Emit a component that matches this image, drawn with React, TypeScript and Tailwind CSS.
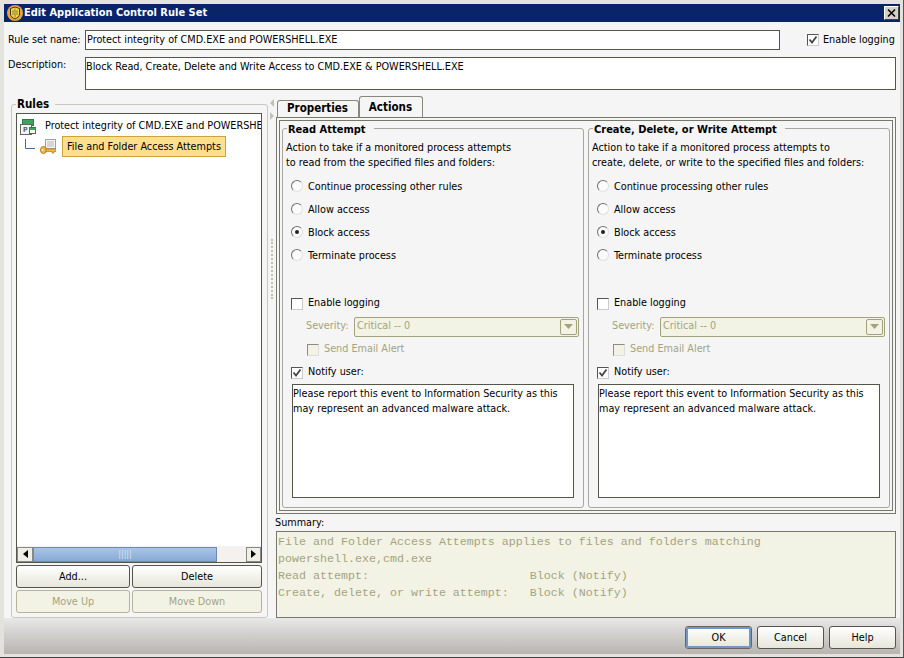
import React from 'react';

const Radio = ({ label, checked }: { label: string; checked?: boolean }) => (
  <div className="flex h-[23px] items-center pl-[5px]">
    <span className="mb-[2px] flex h-[12px] w-[12px] items-center justify-center rounded-full border border-[#707070] border-r-[#e0e0e0] border-b-[#e0e0e0] bg-[#fbfbfb]">
      {checked && <span className="h-[4px] w-[4px] rounded-full bg-[#222]" />}
    </span>
    <span className="ml-[5px] pt-[1px]">{label}</span>
  </div>
);

const Check = ({ checked, disabled }: { checked?: boolean; disabled?: boolean }) => (
  <span
    className={
      disabled
        ? 'flex h-[12px] w-[12px] items-center justify-center border border-[#8c8c80] border-r-[#ddd] border-b-[#ddd] bg-[#f3f3e5]'
        : 'flex h-[12px] w-[12px] items-center justify-center border border-[#555] border-r-[#ccc] border-b-[#ccc] bg-white'
    }
  >
    {checked && (
      <svg width="10" height="10" viewBox="0 0 10 10" fill="none" stroke="#444" strokeWidth="1.8">
        <path d="M1.5 4.5 4 7.5 8.500 1.500" />
      </svg>
    )}
  </span>
);

const Btn = ({ label, width, disabled }: { label: string; width: string; disabled?: boolean }) => (
  <div
    className={
      disabled
        ? `flex h-[23px] ${width} items-center justify-center rounded-[3px] border border-[#b4b496] bg-[#f3f3e5] pt-[1px] text-[#a3a37f]`
        : `flex h-[23px] ${width} items-center justify-center rounded-[3px] border border-[#55554a] bg-gradient-to-b from-white to-[#e6e6da] pt-[1px] text-black`
    }
  >
    {label}
  </div>
);

const AttemptGroup = ({
  title,
  line1,
  line2,
  width,
}: {
  title: string;
  line1: string;
  line2: string;
  width: string;
}) => (
  <fieldset className={`${width} h-[387px] rounded-[3px] border border-[#a8a8a0] pl-[3px]`}>
    <legend className="ml-[1px] pt-[2px] pr-[8px] pl-[1px] text-[11px] leading-[13px] font-bold">{title}</legend>
    <div className="mt-[4px] leading-[15px]">
      <div>{line1}</div>
      <div>{line2}</div>
    </div>
    <div className="mt-[5px]">
      <Radio label="Continue processing other rules" />
      <Radio label="Allow access" />
      <Radio label="Block access" checked />
      <Radio label="Terminate process" />
    </div>
    <div className="mt-[25px] pl-[5px]">
      <div className="flex h-[23px] items-center">
        <Check />
        <span className="ml-[5px]">Enable logging</span>
      </div>
      <div className="flex h-[23px] items-center pl-[15px] text-[#a3a37f]">
        <span className="w-[48px]">Severity:</span>
        <div className="flex h-[20px] w-[225px] items-center justify-between rounded-[2px] border border-[#a3a37b] bg-[#f3f3e5] pl-[2px] pr-[1px]">
          <span>Critical -- 0</span>
          <span className="flex h-[16px] w-[17px] items-center justify-center rounded-[2px] border border-[#a3a37b]">
            <svg width="9" height="5" viewBox="0 0 9 5">
              <path d="M0 0h9L4.5 5z" fill="#a3a37f" />
            </svg>
          </span>
        </div>
      </div>
      <div className="flex h-[23px] items-center pl-[16px] text-[#a3a37f]">
        <Check disabled />
        <span className="ml-[5px]">Send Email Alert</span>
      </div>
      <div className="flex h-[23px] items-center">
        <Check checked />
        <span className="ml-[5px]">Notify user:</span>
      </div>
      <div className="ml-[1px] h-[114px] w-[282px] border border-[#55554a] bg-white pt-[1px] leading-[15px]">
        Please report this event to Information Security as this
        <br />
        may represent an advanced malware attack.
      </div>
    </div>
  </fieldset>
);

const App = () => {
  return (
    <div className="flex h-[658px] w-[904px] flex-col border-r border-b border-r-[#555] border-b-[#444] bg-[#e4e2dc] pt-[4px] pr-[3px] pb-[3px] pl-[4px] font-['DejaVu_Sans_Condensed','DejaVu_Sans',sans-serif] text-[10.75px] text-black">
      {/* title bar */}
      <div className="flex h-[18px] items-center justify-between bg-[#0a246a] pr-[1px] text-white">
        <div className="flex items-center">
          <svg width="16" height="16" viewBox="0 0 16 16" className="ml-[3px]">
            <circle cx="8" cy="8" r="8" fill="#e8a040" />
            <path d="M3.500 3.500 8 2l4.500 1.500V9c0 2.200-2.200 4-4.500 5C5.700 13 3.500 11.200 3.500 9z" fill="#f2d84c" stroke="#3c3c18" />
            <path d="M8 3.500v9M6 5v5M10 5v5" stroke="#8a7c28" />
          </svg>
          <span className="ml-[1px] text-[11px] font-bold">Edit Application Control Rule Set</span>
        </div>
        <div className="flex h-[14px] w-[15px] items-center justify-center border border-[#fff] border-r-[#404040] border-b-[#404040] bg-[#d4d0c8]">
          <svg width="9" height="8" viewBox="0 0 9 8" stroke="#000" strokeWidth="1.5" fill="none">
            <path d="M1 0.500 8 7.500M8 0.500 1 7.500" />
          </svg>
        </div>
      </div>

      <div className="flex flex-1 flex-col bg-[#f5f5f5]">
        {/* name row */}
        <div className="mt-[8px] flex h-[20px] items-center">
          <span className="w-[81px] pt-[1px] pl-[4px]">Rule set name:</span>
          <div className="flex h-[20px] w-[695px] items-center border border-[#55554a] bg-white pt-[1px] pl-[1px]">
            Protect integrity of CMD.EXE and POWERSHELL.EXE
          </div>
          <div className="ml-[27px] flex items-center">
            <Check checked />
            <span className="ml-[4px] pt-[1px]">Enable logging</span>
          </div>
        </div>

        {/* description row */}
        <div className="mt-[7px] flex h-[33px]">
          <span className="w-[81px] pl-[4px]">Description:</span>
          <div className="h-[33px] w-[811px] border border-[#55554a] bg-white pt-[1px] leading-[15px]">
            Block Read, Create, Delete and Write Access to CMD.EXE &amp; POWERSHELL.EXE
          </div>
        </div>

        <div className="mt-[6px] flex h-[522px]">
          {/* rules */}
          <fieldset className="mt-[1px] ml-[7px] h-[521px] w-[257px] rounded-[3px] border border-[#c8c8c0] px-[4px]">
            <legend className="pr-[6px] pl-[1px] text-[11.500px] leading-[15px] font-bold">Rules</legend>
            <div className="mt-[1px] flex h-[450px] w-[246px] flex-col justify-between border border-[#55554a] bg-white">
              <div className="overflow-hidden pt-[3px] whitespace-nowrap">
                <div className="flex h-[19px] items-center pl-[3px]">
                  <svg width="16" height="16" viewBox="0 0 16 16" className="shrink-0">
                    <rect x="2.500" y="0.500" width="11" height="6" fill="#3da35d" stroke="#2c7a45" />
                    <rect x="0.500" y="5.500" width="11" height="10" fill="#f4f4f4" stroke="#666" />
                    <text x="3" y="13" fontSize="7" fontWeight="bold" fill="#666">P</text>
                    <rect x="9.500" y="8.500" width="6" height="6" fill="#fff" stroke="#2c7a45" />
                    <path d="M9.500 10h6" stroke="#3da35d" strokeWidth="2" />
                  </svg>
                  <span className="ml-[9px]">Protect integrity of CMD.EXE and POWERSHELL.EXE</span>
                </div>
                <div className="flex h-[21px] items-center pl-[8px]">
                  <svg width="10" height="12" viewBox="0 0 10 12" className="mb-[4px] shrink-0" fill="none" stroke="#3a6ea5">
                    <path d="M0.500 0v9.500H10" />
                  </svg>
                  <svg width="16" height="16" viewBox="0 0 16 16" className="ml-[5px] shrink-0">
                    <rect x="5.500" y="0.500" width="10" height="9" fill="#f4f4f4" stroke="#a0a0a0" />
                    <path d="M7 3h7M7 5h7M7 7h7" stroke="#b8b8b8" />
                    <ellipse cx="3.500" cy="11" rx="3" ry="3.500" fill="#f0b84a" stroke="#b07a20" />
                    <path d="M6 10h10v2.500h-2v1.500h-2v-1.500H6z" fill="#f0b84a" stroke="#b07a20" strokeWidth="0.700" />
                    <circle cx="2.500" cy="11" r="1" fill="#fff3cc" />
                  </svg>
                  <span className="ml-[6px] flex h-[21px] w-[164px] items-center justify-center border border-[#c9a53c] bg-[#ffdf8c] pt-[1px]">
                    File and Folder Access Attempts
                  </span>
                </div>
              </div>
              {/* scrollbar */}
              <div className="flex h-[16px] items-center bg-[#f4f1ee]">
                <div className="flex h-[15px] w-[16px] items-center justify-center border border-[#888] bg-[#efefe6]">
                  <svg width="5" height="8" viewBox="0 0 5 8"><path d="M5 0v8L0 4z" fill="#000" /></svg>
                </div>
                <div className="flex h-[15px] w-[184px] items-center justify-center border border-[#6c8cb4] bg-gradient-to-b from-[#a9c4e6] to-[#88a9d6] text-[9px] leading-none text-[#d8e4f4]">
                  |||||
                </div>
                <div className="flex-1" />
                <div className="flex h-[15px] w-[15px] items-center justify-center border border-[#888] bg-[#efefe6]">
                  <svg width="5" height="8" viewBox="0 0 5 8"><path d="M0 0v8l5-4z" fill="#000" /></svg>
                </div>
              </div>
            </div>
            <div className="mt-[2px] flex gap-[2px]">
              <Btn label="Add..." width="w-[114px]" />
              <Btn label="Delete" width="w-[130px]" />
            </div>
            <div className="mt-[2px] flex gap-[2px]">
              <Btn label="Move Up" width="w-[114px]" disabled />
              <Btn label="Move Down" width="w-[130px]" disabled />
            </div>
          </fieldset>

          {/* splitter */}
          <div className="flex w-[8px] flex-col items-center pt-[1px]">
            <svg width="6" height="24" viewBox="0 0 6 24" className="mt-[1px]">
              <path d="M5 1v8L1 5z" fill="#c0c0b8" />
              <path d="M1 14v8l4-4z" fill="#c0c0b8" />
            </svg>
            <div className="mt-[117px] h-[60px] w-[2px] border-l-2 border-dotted border-[#c0c0b8]" />
          </div>

          {/* right column */}
          <div className="w-[620px]">
            <div className="flex h-[21px] items-end pl-[1px] text-[11.500px] font-bold">
              <div className="flex h-[17px] w-[82px] items-center justify-center rounded-t-[3px] border border-b-0 border-[#88887a] pr-[1px]">
                Properties
              </div>
              <div className="flex h-[21px] w-[64px] items-center justify-center rounded-t-[3px] border border-b-0 border-[#88887a] bg-[#f5f5f5] pt-[1px] pr-[1px]">
                Actions
              </div>
            </div>
            <div className="h-[397px] border border-[#77776a] p-[2px]">
              <div className="flex h-[391px] justify-between border border-[#77776a] px-[2px]">
                <AttemptGroup
                  title="Read Attempt"
                  line1="Action to take if a monitored process attempts"
                  line2="to read from the specified files and folders:"
                  width="w-[302px]"
                />
                <AttemptGroup
                  title="Create, Delete, or Write Attempt"
                  line1="Action to take if a monitored process attempts to"
                  line2="create, delete, or write to the specified files and folders:"
                  width="w-[302px]"
                />
              </div>
            </div>
            <div className="-ml-[1px] flex h-[17px] items-center pt-[2px]">Summary:</div>
            <div className="h-[87px] border border-[#77776a] bg-[#f3f3e5] pt-[2px] pl-[1px] font-['Liberation_Mono',monospace] text-[11.67px] leading-[17px] whitespace-pre text-[#a3a37f]">
              {`File and Folder Access Attempts applies to files and folders matching
powershell.exe,cmd.exe
Read attempt:                       Block (Notify)
Create, delete, or write attempt:   Block (Notify)`}
            </div>
          </div>
        </div>

        {/* footer */}
        <div className="flex flex-1 items-start justify-end gap-[5px] bg-gradient-to-b from-[#e8e8e8] to-[#b8b4b0] pt-[8px] pr-[4px]">
          <div className="flex h-[23px] w-[67px] items-center justify-center rounded-[3px] border border-[#66665a] bg-gradient-to-b from-white to-[#e6e6da] pt-[1px] shadow-[inset_0_0_0_2px_#6f97c8]">
            OK
          </div>
          <Btn label="Cancel" width="w-[67px]" />
          <Btn label="Help" width="w-[67px]" />
        </div>
      </div>
    </div>
  );
};

export default App;
